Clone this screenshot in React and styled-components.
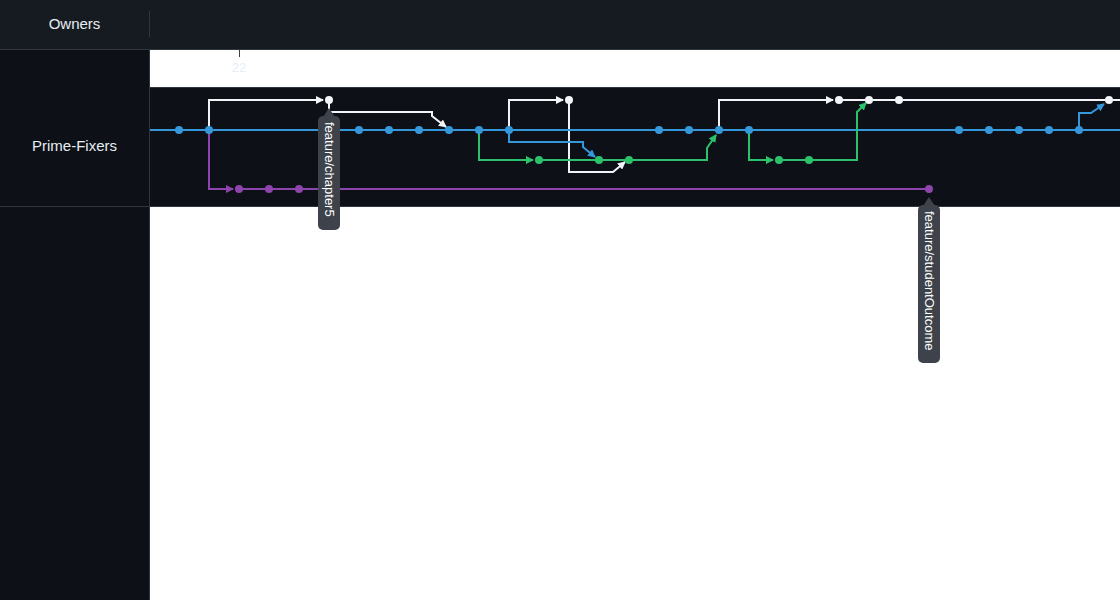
import React from 'react';
import styled, { createGlobalStyle } from 'styled-components';

// colours of the branches
const BLUE = '#3498db';
const GREEN = '#2bc26b';
const PURPLE = '#8e44ad';
const WHITE = '#f2f4f7';

const ORIGIN_X = 150;
const ORIGIN_Y = 88;
const ROW_W = 970;
const ROW_H = 118;

const branches = [
  { color: WHITE, d: 'M209 130 V100 H323', arrow: true },
  { color: WHITE, d: 'M329 100 V112 H432 V116 L446 127', arrow: true },
  { color: WHITE, d: 'M509 130 V100 H563', arrow: true },
  { color: WHITE, d: 'M569 100 V172 H613 L625 162', arrow: true },
  { color: WHITE, d: 'M719 130 V100 H833', arrow: true },
  { color: WHITE, d: 'M839 100 H1120' },
  { color: BLUE, d: 'M150 130 H1120' },
  { color: BLUE, d: 'M509 130 V142 H583 V147 L595 157', arrow: true },
  { color: BLUE, d: 'M1079 130 V113 H1091 L1104 104', arrow: true },
  { color: GREEN, d: 'M479 130 V160 H533', arrow: true },
  { color: GREEN, d: 'M539 160 H707 V148 L716 135', arrow: true },
  { color: GREEN, d: 'M749 130 V160 H773', arrow: true },
  { color: GREEN, d: 'M779 160 H857 V112 L866 103', arrow: true },
  { color: PURPLE, d: 'M209 130 V189 H233', arrow: true },
  { color: PURPLE, d: 'M239 189 H929' },
];

const commits = [
  { color: BLUE, y: 130, xs: [179, 209, 359, 389, 419, 449, 479, 509, 659, 689, 719, 749, 959, 989, 1019, 1049, 1079] },
  { color: WHITE, y: 100, xs: [329, 569, 839, 869, 899, 1109] },
  { color: GREEN, y: 160, xs: [539, 599, 629, 779, 809] },
  { color: PURPLE, y: 189, xs: [239, 269, 299, 929] },
];

const labels = [
  { text: 'feature/chapter5', x: 329, y: 100 },
  { text: 'feature/studentOutcome', x: 929, y: 189 },
];

const markerId = (c) => 'arr' + c.slice(1);

const App = () => {
  return (
    <>
      <GlobalStyle />
      <Page>
        <Header>
          <HeaderCell>Owners</HeaderCell>
          <HeaderDivider />
        </Header>

        <Sidebar>
          <OwnerCell>Prime-Fixers</OwnerCell>
        </Sidebar>

        <Timeline>
          <Axis>
            <svg width={ROW_W} height={37}>
              <line x1={89.5} y1={0} x2={89.5} y2={7} stroke="#3a3f46" strokeWidth={1} />
              <AxisLabel x={89} y={22} textAnchor="middle">22</AxisLabel>
            </svg>
          </Axis>

          <GraphRow>
            <svg
              width={ROW_W}
              height={ROW_H}
              viewBox={`${ORIGIN_X} ${ORIGIN_Y} ${ROW_W} ${ROW_H}`}
            >
              <defs>
                {[WHITE, BLUE, GREEN, PURPLE].map((c) => (
                  <marker
                    key={c}
                    id={markerId(c)}
                    viewBox="0 0 8 8"
                    markerWidth={8}
                    markerHeight={8}
                    markerUnits="userSpaceOnUse"
                    refX={7}
                    refY={4}
                    orient="auto"
                  >
                    <path d="M0 0 L8 4 L0 8 z" fill={c} />
                  </marker>
                ))}
              </defs>
              {branches.map((b, i) => (
                <path
                  key={i}
                  d={b.d}
                  fill="none"
                  stroke={b.color}
                  strokeWidth={2}
                  markerEnd={b.arrow ? `url(#${markerId(b.color)})` : undefined}
                />
              ))}
              {commits.map((row) =>
                row.xs.map((x) => (
                  <circle key={row.color + x} cx={x} cy={row.y} r={4} fill={row.color} />
                ))
              )}
            </svg>

            {labels.map((l) => (
              <Tag
                key={l.text}
                style={{ left: l.x - ORIGIN_X - 11, top: l.y - ORIGIN_Y + 8 }}
              >
                {l.text}
              </Tag>
            ))}
          </GraphRow>
        </Timeline>
      </Page>
    </>
  );
};

const GlobalStyle = createGlobalStyle`
  html, body {
    margin: 0;
    padding: 0;
    background: #ffffff;
  }
  body {
    font-family: "Liberation Sans", Arial, sans-serif;
  }
`;

const Page = styled.div`
  width: 1120px;
  height: 600px;
  display: grid;
  grid-template-columns: 150px 1fr;
  grid-template-rows: 50px 1fr;
  overflow: hidden;
`;

const Header = styled.header`
  grid-column: 1 / 3;
  display: flex;
  align-items: center;
  background: #161b22;
  border-bottom: 1px solid #30363d;
`;

const HeaderCell = styled.div`
  width: 149px;
  text-align: center;
  color: #e6edf3;
  font-size: 15px;
  padding-bottom: 2px;
`;

const HeaderDivider = styled.div`
  width: 1px;
  height: 26px;
  background: #30363d;
  margin-bottom: 1px;
`;

const Sidebar = styled.aside`
  background: #0d1117;
  border-right: 1px solid #30363d;
  padding-top: 38px;
`;

const OwnerCell = styled.div`
  height: 119px;
  box-sizing: border-box;
  padding-bottom: 3px;
  display: flex;
  align-items: center;
  justify-content: center;
  color: #e6edf3;
  font-size: 15px;
  border-bottom: 1px solid #30363d;
`;

const Timeline = styled.main`
  background: #ffffff;
  display: flex;
  flex-direction: column;
`;

const Axis = styled.div`
  height: 37px;
  svg {
    display: block;
  }
`;

const AxisLabel = styled.text`
  font-family: "Liberation Sans", Arial, sans-serif;
  font-size: 13px;
  fill: #e8eef7;
`;

const GraphRow = styled.div`
  position: relative;
  height: ${ROW_H}px;
  background: #0d1117;
  border-top: 1px solid #30363d;
  border-bottom: 1px solid #30363d;
  svg {
    display: block;
  }
`;

const Tag = styled.div`
  position: absolute;
  width: 22px;
  margin-top: 8px;
  padding: 6px 0 13px;
  box-sizing: border-box;
  background: #3d424b;
  border-radius: 5px;
  color: #ffffff;
  font-size: 13px;
  line-height: 22px;
  writing-mode: vertical-rl;
  white-space: nowrap;
  display: flex;
  align-items: center;
  justify-content: center;

  &::before {
    content: '';
    position: absolute;
    top: -8px;
    left: 50%;
    transform: translateX(-50%);
    border-left: 6px solid transparent;
    border-right: 6px solid transparent;
    border-bottom: 9px solid #3d424b;
  }
`;

export default App;
